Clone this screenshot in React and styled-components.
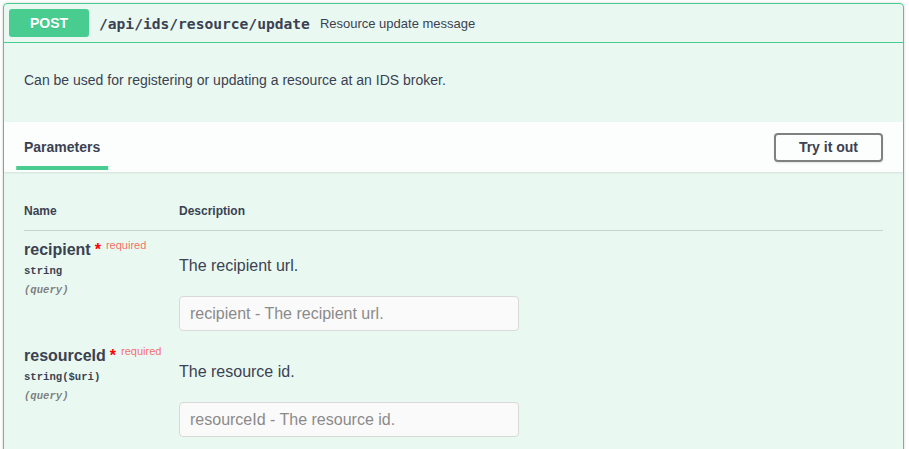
import React from 'react';
import styled, { createGlobalStyle } from 'styled-components';

const GlobalStyle = createGlobalStyle`
  body {
    margin: 0;
    background: #fff;
    font-family: 'Liberation Sans', Arial, sans-serif;
    color: #3b4151;
  }
`;

const Page = styled.div`
  padding: 3px 5px 0 3px;
`;

const Opblock = styled.div`
  width: 901px;
  box-sizing: border-box;
  border: 1px solid #49cc90;
  border-radius: 4px;
  background: rgba(73, 204, 144, 0.12);
  box-shadow: 0 0 3px rgba(0, 0, 0, 0.19);
`;

const Summary = styled.div`
  display: flex;
  align-items: center;
  padding: 5px;
  border-bottom: 1px solid #49cc90;
`;

const Method = styled.span`
  min-width: 80px;
  box-sizing: border-box;
  padding: 6px 15px;
  border-radius: 3px;
  background: #49cc90;
  color: #fff;
  font-size: 14px;
  line-height: 16px;
  font-weight: 700;
  text-align: center;
  text-shadow: 0 1px 0 rgba(0, 0, 0, 0.1);
`;

const Path = styled.span`
  padding: 0 10px;
  font-family: 'DejaVu Sans Mono', 'Liberation Mono', monospace;
  font-size: 14.6px;
  font-weight: 700;
  color: #3b4151;
`;

const SummaryText = styled.span`
  flex: 1;
  font-size: 13px;
  color: #3b4151;
`;

const DescWrap = styled.div`
  padding: 15px 20px;
  margin-bottom: 5px;
  font-size: 14px;

  p {
    margin: 14px 0;
    line-height: 16px;
  }
`;

const SectionHeader = styled.div`
  display: flex;
  align-items: center;
  justify-content: space-between;
  min-height: 50px;
  box-sizing: border-box;
  padding: 8px 20px;
  background: rgba(255, 255, 255, 0.8);
  box-shadow: 0 1px 2px rgba(0, 0, 0, 0.1);
`;

const Tab = styled.h4`
  position: relative;
  margin: 0;
  font-size: 14px;
  font-weight: 700;
  color: #3b4151;

  &::after {
    content: '';
    position: absolute;
    left: 50%;
    bottom: -15px;
    width: 120%;
    height: 4px;
    transform: translateX(-50%);
    background: #49cc90;
  }
`;

const TryButton = styled.button`
  padding: 5px 23px;
  border: 2px solid gray;
  border-radius: 4px;
  background: transparent;
  box-shadow: 0 1px 2px rgba(0, 0, 0, 0.1);
  font-family: 'Liberation Sans', Arial, sans-serif;
  font-size: 14px;
  line-height: 15px;
  font-weight: 700;
  color: #3b4151;
`;

const TableContainer = styled.div`
  padding: 20px 20px 40px;
`;

const HeadRow = styled.div`
  display: grid;
  grid-template-columns: 155px 1fr;
  border-bottom: 1px solid rgba(59, 65, 81, 0.2);
`;

const Th = styled.div`
  padding: 12px 0;
  font-size: 12px;
  line-height: 14px;
  font-weight: 700;
  color: #3b4151;
`;

const Row = styled.div`
  display: grid;
  grid-template-columns: 155px 1fr;
  padding: 10px 0 6px;
`;

const ParamName = styled.div`
  font-size: 16px;
  line-height: 18px;
  font-weight: 700;
  color: #3b4151;
`;

const Star = styled.span`
  color: red;
  margin-left: 4px;
`;

const Required = styled.span`
  position: relative;
  top: -6px;
  padding-left: 5px;
  font-size: 11px;
  font-weight: 400;
  color: rgba(255, 0, 0, 0.6);
`;

const Mono = styled.div`
  font-family: 'Liberation Mono', 'DejaVu Sans Mono', monospace;
  font-size: 10.6px;
  line-height: 14px;
  font-weight: 700;
`;

const ParamType = styled(Mono)`
  padding-top: 4px;
  color: #3b4151;
`;

const ParamIn = styled(Mono)`
  margin-top: 5px;
  font-style: italic;
  color: gray;
`;

const DescText = styled.p`
  margin: 16px 0 21px;
  font-size: 16px;
  line-height: 18px;
  color: #3b4151;
`;

const Input = styled.input`
  display: block;
  width: 340px;
  height: 35px;
  box-sizing: border-box;
  margin: 0;
  padding: 8px 10px;
  border: 1px solid #d9d9d9;
  border-radius: 4px;
  background: #fafafa;
  font-family: 'Liberation Sans', Arial, sans-serif;
  font-size: 16px;
  color: #3b4151;

  &::placeholder {
    color: #8a8a8a;
  }
`;

const params = [
  { name: 'recipient', type: 'string', desc: 'The recipient url.' },
  { name: 'resourceId', type: 'string($uri)', desc: 'The resource id.' },
];

export default function App() {
  return (
    <Page>
      <GlobalStyle />
      <Opblock>
        <Summary>
          <Method>POST</Method>
          <Path>/api/ids/resource/update</Path>
          <SummaryText>Resource update message</SummaryText>
        </Summary>

        <DescWrap>
          <p>Can be used for registering or updating a resource at an IDS broker.</p>
        </DescWrap>

        <SectionHeader>
          <Tab>Parameters</Tab>
          <TryButton>Try it out</TryButton>
        </SectionHeader>

        <TableContainer>
          <HeadRow>
            <Th>Name</Th>
            <Th>Description</Th>
          </HeadRow>
          {params.map((p) => (
            <Row key={p.name}>
              <div>
                <ParamName>
                  {p.name}
                  <Star>*</Star>
                  <Required>required</Required>
                </ParamName>
                <ParamType>{p.type}</ParamType>
                <ParamIn>(query)</ParamIn>
              </div>
              <div>
                <DescText>{p.desc}</DescText>
                <Input placeholder={`${p.name} - ${p.desc}`} />
              </div>
            </Row>
          ))}
        </TableContainer>
      </Opblock>
    </Page>
  );
}
